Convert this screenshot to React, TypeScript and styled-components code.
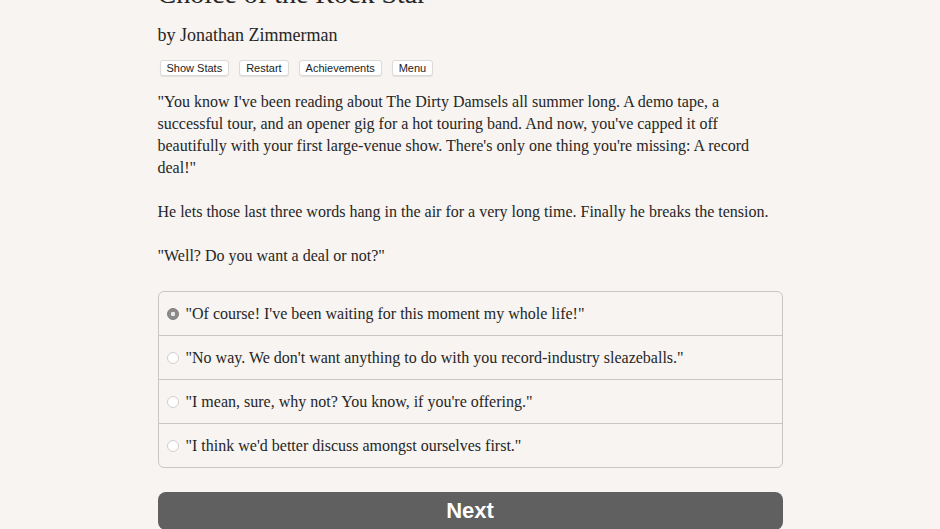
import React, { useState } from 'react';
import styled, { createGlobalStyle } from 'styled-components';

const GlobalStyle = createGlobalStyle`
  html, body {
    margin: 0;
    padding: 0;
    background: #f7f4f1;
  }
  body {
    overflow: hidden;
    font-family: 'Liberation Serif', 'Times New Roman', serif;
    color: #262626;
  }
`;

const Page = styled.div`
  width: 625px;
  margin: 0 auto;
  padding-top: 1px;
`;

const Title = styled.h1`
  margin: -22px 0 0;
  font-size: 28px;
  line-height: 30px;
  font-weight: normal;
`;

const Author = styled.h2`
  margin: 0;
  padding-top: 14px;
  font-size: 18px;
  line-height: 24px;
  font-weight: normal;
`;

const Toolbar = styled.div`
  display: flex;
  gap: 10px;
  margin: 13px 0 0 2px;
`;

const ToolButton = styled.button`
  height: 16px;
  padding: 0 6px;
  font-family: 'Liberation Sans', Arial, sans-serif;
  font-size: 11px;
  line-height: 14px;
  color: #222;
  background: #fff;
  border: 1px solid #dcdad7;
  border-radius: 3px;
  box-shadow: 0 1px 1px rgba(0, 0, 0, 0.08);
  cursor: pointer;
`;

const Text = styled.p`
  margin: 0 0 22px;
  font-size: 16px;
  line-height: 22px;
  &:first-of-type {
    margin-top: 15px;
  }
`;

const Choices = styled.div`
  margin-top: 24px;
  border: 1px solid #c9c6c3;
  border-radius: 6px;
  overflow: hidden;
`;

const Choice = styled.label`
  display: flex;
  align-items: center;
  gap: 7px;
  height: 43px;
  padding: 0 8px;
  font-size: 16px;
  cursor: pointer;
  & + & {
    border-top: 1px solid #c9c6c3;
  }
`;

const Radio = styled.span<{ $checked: boolean }>`
  flex: none;
  width: 12px;
  height: 12px;
  box-sizing: border-box;
  border-radius: 50%;
  border: 1px solid ${(p) => (p.$checked ? '#7d7d7d' : '#d2d0ce')};
  background: ${(p) =>
    p.$checked
      ? 'radial-gradient(circle, #e8e8e8 0 2px, #8a8a8a 2.5px)'
      : '#fff'};
`;

const NextButton = styled.button`
  display: block;
  width: 100%;
  height: 38px;
  margin-top: 24px;
  font-family: 'Liberation Sans', Arial, sans-serif;
  font-size: 22px;
  font-weight: bold;
  color: #fff;
  background: #616060;
  border: none;
  border-radius: 8px;
  cursor: pointer;
`;

const options = [
  '"Of course! I\'ve been waiting for this moment my whole life!"',
  '"No way. We don\'t want anything to do with you record-industry sleazeballs."',
  '"I mean, sure, why not? You know, if you\'re offering."',
  '"I think we\'d better discuss amongst ourselves first."',
];

const App: React.FC = () => {
  const [selected, setSelected] = useState(0);

  return (
    <>
      <GlobalStyle />
      <Page>
        <Title>Choice of the Rock Star</Title>
        <Author>by Jonathan Zimmerman</Author>
        <Toolbar>
          <ToolButton>Show Stats</ToolButton>
          <ToolButton>Restart</ToolButton>
          <ToolButton>Achievements</ToolButton>
          <ToolButton>Menu</ToolButton>
        </Toolbar>
        <Text>
          "You know I've been reading about The Dirty Damsels all summer long. A demo tape, a
          successful tour, and an opener gig for a hot touring band. And now, you've capped it off
          beautifully with your first large-venue show. There's only one thing you're missing: A
          record deal!"
        </Text>
        <Text>
          He lets those last three words hang in the air for a very long time. Finally he breaks the
          tension.
        </Text>
        <Text>"Well? Do you want a deal or not?"</Text>
        <Choices>
          {options.map((option, i) => (
            <Choice key={option} onClick={() => setSelected(i)}>
              <Radio $checked={selected === i} />
              {option}
            </Choice>
          ))}
        </Choices>
        <NextButton>Next</NextButton>
      </Page>
    </>
  );
};

export default App;
